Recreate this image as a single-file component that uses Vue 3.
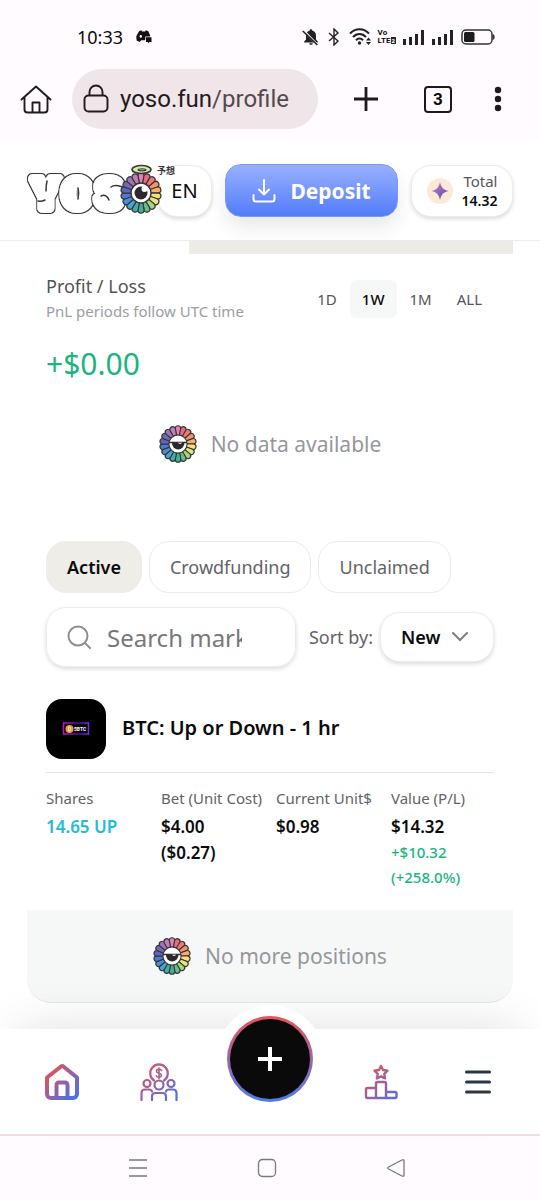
<script setup>
import { ref } from 'vue'

const petals = [
  '#e583b5', '#e66d86', '#ee7a6d', '#f2946b', '#f6b168', '#fbe07a',
  '#e3e97f', '#a8d47c', '#69bd86', '#46b190', '#3fb0a8', '#47a5d2',
  '#4b8fd2', '#4f78d0', '#5a66c0', '#7368b4', '#9877b6', '#c07db8'
]
const periods = ['1D', '1W', '1M', 'ALL']
const period = ref('1W')
const filters = ['Active', 'Crowdfunding', 'Unclaimed']
const filter = ref('Active')
const sort = ref('New')
const search = ref('')
</script>

<template>
  <div class="screen">
    <svg class="defs" aria-hidden="true">
      <defs>
        <symbol id="petals" viewBox="-50 -50 100 100">
          <path
            v-for="(color, i) in petals"
            :key="i"
            d="M0 0 L-7.4 -40 A7.4 8 0 0 1 7.4 -40 Z"
            :fill="color"
            stroke="#38353a"
            stroke-width="3"
            :transform="`rotate(${i * 20})`"
          />
        </symbol>
        <symbol id="sleepy" viewBox="-50 -50 100 100">
          <use href="#petals" x="-50" y="-50" width="100" height="100" />
          <circle r="24" fill="#fff" stroke="#38353a" stroke-width="3" />
          <path d="M-24 -4H24" stroke="#38353a" stroke-width="4" />
          <path d="M-16 -3H17A16 17 0 0 1 -16 -3Z" fill="#2b292c" />
          <path d="M0 -3H11A6 5 0 0 1 0 -3Z" fill="#fff" />
        </symbol>
        <linearGradient id="brand" x1="0" y1="0" x2="1" y2="1">
          <stop offset="0.15" stop-color="#d9545f" />
          <stop offset="0.9" stop-color="#4f6fe8" />
        </linearGradient>
        <linearGradient id="brandSoft" gradientUnits="userSpaceOnUse" x1="6" y1="4" x2="36" y2="38">
          <stop offset="0.1" stop-color="#d0566c" />
          <stop offset="0.9" stop-color="#5470e0" />
        </linearGradient>
        <filter id="outline" x="-30%" y="-30%" width="160%" height="160%">
          <feMorphology in="SourceAlpha" operator="dilate" radius="1.4" result="fat" />
          <feFlood flood-color="#38363a" />
          <feComposite in2="fat" operator="in" />
          <feMerge><feMergeNode /><feMergeNode in="SourceGraphic" /></feMerge>
        </filter>
      </defs>
    </svg>

    <div class="status">
      <div class="status-left">
        <span>10:33</span>
        <svg width="16" height="14" viewBox="0 0 16 14" fill="#111">
          <path d="M3 1.2 5.4.3 6 1.4h3L9.7.3l2.6.9 1.9 4.2-.3 1H9.3v3.2l-.6.7H5.2L3.6 12 .6 10.6.3 6.2Z" />
          <ellipse cx="4.8" cy="6.4" rx="1.2" ry="1.4" fill="#fffbff" />
          <path d="M10 7.3h5.5v4.8h-2.3L11.9 13.6v-1.5H10Z" />
        </svg>
      </div>
      <div class="status-right">
        <svg width="18" height="18" viewBox="0 0 18 18">
          <path d="M9 1.2c.8 0 1.2.5 1.2 1.2 2.4.7 3.8 2.5 3.8 5v4l1.8 2v1H2.2v-1l1.8-2v-4c0-2.5 1.4-4.3 3.8-5 0-.7.4-1.2 1.2-1.2ZM7.2 15.2h3.6c0 2.2-3.6 2.2-3.6 0Z" fill="#222" />
          <path d="M1.8 2.8 15.6 17" stroke="#fffbff" stroke-width="2" />
          <path d="M.8 3 15.4 17" stroke="#222" stroke-width="1.6" />
        </svg>
        <svg class="bt" width="12" height="18" viewBox="0 0 12 18" fill="none" stroke="#222" stroke-width="1.4">
          <path d="m1 5 9 8-4 4V1l4 4-9 8" />
        </svg>
        <svg class="wifi" width="23" height="18" viewBox="0 0 23 18" fill="none" stroke="#222" stroke-width="2.1">
          <path d="M1 5.6C6-.2 15-.2 20 5.6M4 9c3.6-4 9.400-4 13 0M7 12.200c2-2.200 5-2.200 7 0" />
          <circle cx="10.500" cy="15" r="1.700" fill="#222" stroke="none" />
          <path d="m17 12.400 2.500-3 2.500 3ZM17 14l2.500 3 2.500-3Z" fill="#222" stroke="none" />
        </svg>
        <span class="volte"><span>Vo</span><span>LTE<b>2</b></span></span>
        <svg v-for="n in 2" :key="n" class="bars" width="22" height="16" viewBox="0 0 22 16" fill="#222">
          <path d="M0 10h3v6H0ZM6 8h3v8H6ZM12 5h3v11h-3ZM18 1h3v15h-3Z" />
        </svg>
        <svg class="battery" width="34" height="16" viewBox="0 0 34 16">
          <rect x="1" y="1" width="30" height="14" rx="4" fill="none" stroke="#333" stroke-width="1.500" />
          <rect x="3" y="3" width="10.500" height="10" rx="1.500" fill="#1c1b1d" />
          <path d="M32 5.500c1.500.5 1.500 4.500 0 5Z" fill="#333" stroke="#333" />
        </svg>
      </div>
    </div>

    <div class="toolbar">
      <button class="plain" aria-label="Home page">
        <svg width="32" height="30" viewBox="0 0 32 30" fill="none" stroke="#1f1b1e" stroke-width="1.900" stroke-linejoin="round" stroke-linecap="round">
          <path d="M1.500 15.500 16 2.500l14.500 13M4.500 13v12.500a3 3 0 0 0 3 3h17a3 3 0 0 0 3-3V13M12.500 28V18.500h7V28" />
        </svg>
      </button>
      <a class="address" href="#profile">
        <svg width="26" height="30" viewBox="0 0 26 30" fill="none" stroke="#1f1b1e" stroke-width="1.900">
          <rect x="1.500" y="11.500" width="23" height="16" rx="4" />
          <path d="M6.500 11.500V8a6.500 6.500 0 0 1 13 0v3.500" />
        </svg>
        <span class="url">yoso.fun<i>/profile</i></span>
      </a>
      <button class="plain plus" aria-label="New tab">
        <svg width="24" height="24" viewBox="0 0 24 24" stroke="#1c1a1d" stroke-width="2.800"><path d="M12 0v24M0 12h24" /></svg>
      </button>
      <button class="plain tabs-count" aria-label="Open tabs">3</button>
      <button class="plain dots" aria-label="Menu">
        <svg width="8" height="26" viewBox="0 0 8 26" fill="#1c1a1d"><circle cx="4" cy="4" r="3.200" /><circle cx="4" cy="13" r="3.200" /><circle cx="4" cy="22" r="3.200" /></svg>
      </button>
    </div>

    <header class="site-header">
      <a class="logo" href="#home" aria-label="YOSO">
        <svg width="150" height="56" viewBox="0 0 150 56">
          <g class="bubble" filter="url(#outline)"><text x="6" y="45">Y</text></g>
          <g class="bubble" filter="url(#outline)"><text x="36" y="45">O</text></g>
          <g class="bubble" filter="url(#outline)"><text x="69" y="45">S</text></g>
          <g fill="none" stroke="#38363a" stroke-width="1.500" stroke-linecap="round">
            <path d="M20 18c-1 4-1 7-1 10M11 38c3 1 5 0 7-1M51 25c1 4 1 7 0 11M84 24c4-3 8-1 12 0M74 33c4-2 7 1 8 4" />
          </g>
          <use href="#petals" x="93" y="9" width="42" height="42" />
          <circle cx="114" cy="30" r="10" fill="#fff" stroke="#38353a" stroke-width="1.400" />
          <circle cx="114" cy="30" r="6.500" fill="#2b292c" />
          <circle cx="117.500" cy="26" r="3" fill="#fff" />
          <ellipse cx="114.500" cy="6.500" rx="9.500" ry="4" fill="#d5f0a9" stroke="#38363a" stroke-width="1.700" />
          <ellipse cx="115" cy="6.800" rx="4" ry="1" fill="#fff" stroke="#38363a" stroke-width="1.200" />
          <text class="kanji" x="130" y="11">予想</text>
        </svg>
      </a>
      <button class="lang">EN</button>
      <button class="deposit">
        <svg width="24" height="24" viewBox="0 0 24 24" fill="none" stroke="#fff" stroke-width="2" stroke-linecap="round" stroke-linejoin="round">
          <path d="M12 1v14M7 10.500l5 5 5-5M1.500 16v4a2.500 2.500 0 0 0 2.500 2.500h16a2.500 2.500 0 0 0 2.500-2.500v-4" />
        </svg>
        <span>Deposit</span>
      </button>
      <button class="total">
        <svg width="26" height="26" viewBox="0 0 26 26">
          <defs>
            <linearGradient id="spark" x1="0" y1="0" x2="1" y2="1"><stop offset="0.2" stop-color="#b878b8" /><stop offset="0.8" stop-color="#6a50b8" /></linearGradient>
          </defs>
          <circle cx="13" cy="13" r="13" fill="#fbe9d8" />
          <path d="M13 4c1.300 5.500 3 7.500 8.500 9-5.500 1.500-7.200 3.500-8.500 9-1.300-5.500-3-7.500-8.500-9 5.500-1.500 7.200-3.500 8.500-9Z" fill="url(#spark)" />
        </svg>
        <span class="total-text"><span>Total</span><strong>14.32</strong></span>
      </button>
    </header>

    <main>
      <div class="strip"></div>
      <section class="pnl">
        <div class="pnl-head">
          <div>
            <h2>Profit / Loss</h2>
            <p class="note">PnL periods follow UTC time</p>
          </div>
          <div class="periods">
            <button v-for="p in periods" :key="p" :class="{ on: p === period }" @click="period = p">{{ p }}</button>
          </div>
        </div>
        <p class="amount">+$0.00</p>
        <div class="empty">
          <svg width="38" height="38"><use href="#sleepy" width="38" height="38" /></svg>
          <span>No data available</span>
        </div>
      </section>

      <section class="positions">
        <div class="chips">
          <button v-for="f in filters" :key="f" :class="{ on: f === filter }" @click="filter = f">{{ f }}</button>
        </div>
        <div class="tools">
          <label class="search">
            <svg width="24" height="24" viewBox="0 0 24 24" fill="none" stroke="#8d8f93" stroke-width="2" stroke-linecap="round">
              <circle cx="11" cy="11" r="9.500" /><path d="m18 18 5 5" />
            </svg>
            <input v-model="search" type="text" placeholder="Search markets" aria-label="Search markets">
          </label>
          <label class="sort-label" for="sort">Sort by:</label>
          <div class="sort">
            <select id="sort" v-model="sort"><option>New</option></select>
            <svg width="16" height="10" viewBox="0 0 16 10" fill="none" stroke="#7d7f83" stroke-width="2" stroke-linecap="round"><path d="m1 1 7 7 7-7" /></svg>
          </div>
        </div>

        <article class="market">
          <div class="market-head">
            <svg class="thumb" width="60" height="60" viewBox="0 0 60 60">
              <defs>
                <linearGradient id="neon"><stop offset="0" stop-color="#b317c9" /><stop offset="0.6" stop-color="#4a1590" /><stop offset="1" stop-color="#6a35d8" /></linearGradient>
              </defs>
              <rect width="60" height="60" fill="#000" />
              <rect x="17.500" y="24" width="25" height="11" fill="#08020f" stroke="url(#neon)" stroke-width="1.500" />
              <circle cx="23.500" cy="30" r="4" fill="#f39a38" />
              <path d="M22.500 28h1.500q1 1 0 2 1 1 0 2h-1.500Z" fill="none" stroke="#fff" stroke-width=".7" />
              <text x="28" y="32">5BTC</text>
            </svg>
            <h3>BTC: Up or Down - 1 hr</h3>
          </div>
          <table>
            <thead>
              <tr><th>Shares</th><th>Bet (Unit Cost)</th><th>Current Unit$</th><th>Value (P/L)</th></tr>
            </thead>
            <tbody>
              <tr>
                <td class="side">14.65 UP</td>
                <td>$4.00<br>($0.27)</td>
                <td>$0.98</td>
                <td>$14.32<span class="gain">+$10.32<br>(+258.0%)</span></td>
              </tr>
            </tbody>
          </table>
        </article>
      </section>

      <div class="empty end">
        <svg width="38" height="38"><use href="#sleepy" width="38" height="38" /></svg>
        <span>No more positions</span>
      </div>
    </main>

    <nav class="bottom">
      <a href="#home" aria-label="Home">
        <svg width="36" height="38" viewBox="0 0 36 38" fill="none" stroke="url(#brand)" stroke-width="4" stroke-linejoin="round">
          <path d="M3 14.500 17 3.500q1.200-.8 2.400 0L33 14.500V31a4 4 0 0 1-4 4H7a4 4 0 0 1-4-4ZM12.500 35V22a2.500 2.500 0 0 1 2.500-2.500h6a2.500 2.500 0 0 1 2.500 2.500v13" />
        </svg>
      </a>
      <a href="#crowd" aria-label="Crowdfunding">
        <svg width="38" height="38" viewBox="0 0 38 38" fill="none" stroke="url(#brandSoft)" stroke-width="2.200" stroke-linecap="round">
          <path d="M14 17.500A8.800 8.800 0 1 1 24 17.500" />
          <path d="M21.500 7.500c-1-1.800-5-1.500-5 .8 0 2.600 5 1.400 5 4 0 2.200-4 2.500-5.200.6M19 5v10.500" stroke-width="1.600" />
          <circle cx="19" cy="22" r="4.500" /><circle cx="7" cy="20.500" r="3.500" /><circle cx="31" cy="20.500" r="3.500" />
          <path d="M1.500 37v-7q0-3.500 3.500-3.500h4q2.500 0 3 2M36.500 37v-7q0-3.500-3.500-3.500h-4q-2.500 0-3 2M12 37v-3.500q0-3.500 3.500-3.500h7q3.500 0 3.500 3.500V37" />
        </svg>
      </a>
      <div class="fab-cell">
        <button class="fab" aria-label="Create">
          <span><svg width="24" height="24" viewBox="0 0 24 24" stroke="#fff" stroke-width="4"><path d="M12 0v24M0 12h24" /></svg></span>
        </button>
      </div>
      <a href="#leaders" aria-label="Leaderboard">
        <svg width="34" height="36" viewBox="0 0 34 36" fill="none" stroke="url(#brandSoft)" stroke-width="2.400" stroke-linejoin="round">
          <path d="m17 2 2 4 4.500.7-3.200 3.200.7 4.500-4-2-4 2 .7-4.500-3.200-3.200L15 6Z" />
          <path d="M12 34H3.500q-1.500 0-1.500-1.500v-7Q2 24 3.500 24H12ZM12 34V19.500q0-1.500 1.500-1.500h7q1.500 0 1.500 1.500V34ZM22 34h9q1.500 0 1.500-1.500v-3q0-1.500-1.500-1.500h-9Z" />
        </svg>
      </a>
      <button class="plain" aria-label="Open menu">
        <svg width="28" height="24" viewBox="0 0 28 24" stroke="#2c3645" stroke-width="3" stroke-linecap="round"><path d="M2.500 2h23M2.500 12h23M2.500 22h23" /></svg>
      </button>
    </nav>

    <div class="system">
      <svg width="20" height="20" viewBox="0 0 20 20" stroke="#7b777c" stroke-width="1.500"><path d="M1 2h18M1 10h18M1 18h18" /></svg>
      <svg width="20" height="20" viewBox="0 0 20 20" fill="none" stroke="#7b777c" stroke-width="1.300"><rect x="1.500" y="1.500" width="17" height="17" rx="4" /></svg>
      <svg width="20" height="20" viewBox="0 0 20 20" fill="none" stroke="#7b777c" stroke-width="1.300" stroke-linejoin="round"><path d="M2.500 9 16 2q2-.8 2 1v14q0 1.800-2 1L2.500 11q-1.500-1 0-2Z" /></svg>
    </div>
  </div>
</template>

<style>
body {
  margin: 0;
  background: #fff;
}
</style>

<style scoped>
.screen {
  display: flex;
  flex-direction: column;
  min-height: 100vh;
  overflow: hidden;
  background: #fff;
  color: #0b0b0c;
  font-family: "Noto Sans", "Noto Sans CJK JP", sans-serif;
}
.screen *,
.screen {
  box-sizing: border-box;
}
.defs {
  position: absolute;
  width: 0;
  height: 0;
}
svg {
  display: block;
  flex: none;
}
button,
input,
select {
  font: inherit;
  color: inherit;
}
button {
  cursor: pointer;
  padding: 0;
}
a {
  color: inherit;
  text-decoration: none;
}
h2,
h3,
p {
  margin: 0;
  font-weight: 400;
}
.plain {
  display: flex;
  align-items: center;
  justify-content: center;
  border: 0;
  background: none;
}

.status {
  display: flex;
  justify-content: space-between;
  align-items: center;
  padding: 4px 45px 0 77px;
  height: 69px;
  background: #fffbff;
}
.status-left,
.status-right {
  display: flex;
  align-items: center;
}
.status-left {
  gap: 13px;
  font-size: 18px;
}
.bt {
  margin-left: 8px;
}
.wifi {
  margin-left: 9px;
}
.volte {
  display: flex;
  flex-direction: column;
  margin: 0 7px 0 6px;
  font: 700 8px/8px Roboto, sans-serif;
}
.volte b {
  padding: 0 1px;
  background: #222;
  color: #fff;
  font-size: 6px;
}
.bars {
  margin-right: 7px;
}

.toolbar {
  display: flex;
  align-items: center;
  padding: 0 38px 12px 20px;
  background: #fffbff;
}
.address {
  display: flex;
  flex: 1;
  align-items: center;
  gap: 11px;
  min-width: 0;
  height: 60px;
  margin: 0 36px 0 20px;
  padding: 0 11px;
  border-radius: 30px;
  background: #f0e6e9;
}
.url {
  font: 400 24px/32px Roboto, sans-serif;
  color: #1f1b1e;
}
.url i {
  font-style: normal;
  color: #55494d;
}
.tabs-count {
  width: 28px;
  height: 27px;
  margin: 0 42px 0 46px;
  border: 2px solid #1c1a1d;
  border-radius: 4px;
  font: 700 17px/20px Roboto, sans-serif;
}

.site-header {
  display: flex;
  align-items: center;
  height: 100px;
  padding: 0 27px;
  border-bottom: 1px solid #ececec;
}
.logo {
  position: relative;
  z-index: 1;
  margin-right: -20px;
}
.bubble {
  font: 900 41px Roboto, sans-serif;
  fill: #fff;
  stroke: #fff;
  stroke-width: 10px;
  stroke-linejoin: round;
}
.kanji {
  font: 600 9px "Noto Sans CJK JP", sans-serif;
  fill: #38363a;
}
.lang,
.total {
  border: 1px solid #ececec;
  border-radius: 20px;
  background: #fff;
  box-shadow: 0 2px 4px rgba(0, 0, 0, 0.14);
}
.lang {
  width: 55px;
  height: 52px;
  font-size: 20px;
}
.deposit {
  display: flex;
  flex: 1;
  align-items: center;
  justify-content: center;
  gap: 14px;
  height: 53px;
  margin: 0 13px;
  border: 1px solid #7c98f8;
  border-radius: 16px;
  background: linear-gradient(#98b0ff, #527cfa);
  box-shadow: 0 10px 20px rgba(0, 0, 0, 0.09);
  color: #fff;
  font-size: 21px;
  font-weight: 700;
}
.total {
  display: flex;
  align-items: center;
  justify-content: center;
  gap: 9px;
  width: 102px;
  height: 52px;
}
.total-text {
  display: flex;
  flex-direction: column;
  align-items: flex-end;
  font-size: 15px;
  line-height: 20px;
  color: #55565a;
}
.total strong {
  color: #0b0b0c;
  font-size: 14px;
  font-weight: 600;
}

main {
  flex: 1;
}
.strip {
  height: 13px;
  margin: 0 27px 0 35%;
  background: #ecebe6;
}
.pnl,
.positions {
  padding: 0 46px;
}
.pnl {
  padding-top: 20px;
}
.pnl-head {
  display: flex;
  align-items: center;
  justify-content: space-between;
}
h2 {
  font-size: 18px;
  line-height: 25px;
  color: #525356;
}
.note {
  font-size: 15px;
  line-height: 24px;
  color: #9b9da3;
}
.periods {
  display: flex;
  gap: 1px;
}
.periods button {
  height: 38px;
  padding: 0 12px;
  border: 0;
  border-radius: 6px;
  background: none;
  color: #55565a;
  font-size: 15px;
}
.periods .on {
  background: #f6f8f8;
  color: #0b0b0c;
  font-weight: 500;
}
.amount {
  margin-top: 21px;
  font-size: 30px;
  line-height: 40px;
  color: #1cb57e;
}
.empty {
  display: flex;
  align-items: center;
  justify-content: center;
  gap: 14px;
  padding: 41px 0 78px;
  color: #95979c;
  font-size: 21px;
  line-height: 38px;
}
.chips {
  display: flex;
  gap: 7px;
}
.chips button {
  height: 52px;
  padding: 0 20px;
  border: 1px solid #ebebeb;
  border-radius: 20px;
  background: #fff;
  color: #626367;
  font-size: 18px;
}
.chips .on {
  border-color: #eeede8;
  background: #eeede8;
  color: #0b0b0c;
  font-weight: 600;
}
.tools {
  display: flex;
  align-items: center;
  margin-top: 14px;
}
.search {
  display: flex;
  flex: 1;
  align-items: center;
  gap: 16px;
  min-width: 0;
  height: 60px;
  padding: 0 53px 0 20px;
  border: 1px solid #ececec;
  border-radius: 20px;
  box-shadow: 0 2px 4px rgba(0, 0, 0, 0.14);
}
.search input {
  flex: 1;
  min-width: 0;
  width: 0;
  padding: 0;
  border: 0;
  outline: 0;
  background: none;
  font-size: 24px;
}
.search input::placeholder {
  color: #77787c;
}
.sort-label {
  margin: 0 7px 0 13px;
  color: #626367;
  font-size: 18px;
}
.sort {
  position: relative;
}
.sort select {
  appearance: none;
  width: 114px;
  height: 50px;
  padding: 0 20px;
  border: 1px solid #ececec;
  border-radius: 20px;
  background: #fff;
  box-shadow: 0 2px 4px rgba(0, 0, 0, 0.14);
  font-size: 18px;
  font-weight: 600;
}
.sort svg {
  position: absolute;
  top: 20px;
  right: 26px;
  pointer-events: none;
}
.market-head {
  display: flex;
  align-items: center;
  gap: 16px;
  margin-top: 32px;
  padding-bottom: 13px;
  border-bottom: 1px solid #e6e6e6;
}
.thumb {
  border-radius: 16px;
}
.thumb text {
  font: 700 5px Roboto, sans-serif;
  fill: #fff;
}
h3 {
  padding-bottom: 4px;
  font-size: 20px;
  font-weight: 600;
}
table {
  width: 100%;
  margin: 13px 0 20px;
  border-collapse: collapse;
  table-layout: fixed;
  text-align: left;
}
th,
td {
  padding: 0;
  vertical-align: top;
  white-space: nowrap;
}
th:last-child {
  width: 23%;
}
th {
  color: #626367;
  font-size: 15px;
  font-weight: 400;
  line-height: 24px;
}
td {
  padding-top: 4px;
  font-size: 17px;
  font-weight: 600;
  line-height: 26px;
}
.side {
  color: #22bcd8;
}
.gain {
  display: block;
  color: #1cb57e;
  font-size: 15px;
  font-weight: 500;
  line-height: 25px;
}
.end {
  margin: 0 27px 26px;
  padding: 27px 0;
  border-bottom: 1px solid #e6e8e8;
  border-radius: 0 0 24px 24px;
  background: #f6f8f8;
}

.bottom {
  position: relative;
  display: grid;
  grid-template-columns: 1fr 1fr 125px 1fr 1fr;
  align-items: center;
  justify-items: center;
  height: 105px;
  padding: 0 13px;
  background: #fff;
  box-shadow: 0 -20px 50px -20px rgba(0, 0, 0, 0.13);
}
.fab-cell {
  position: relative;
  align-self: stretch;
  width: 86px;
}
.fab {
  position: absolute;
  top: -13px;
  left: 0;
  width: 86px;
  height: 86px;
  padding: 3px;
  border: 0;
  border-radius: 50%;
  background: linear-gradient(#e8545a, #4f7bea);
  box-shadow: 0 0 0 11px #fff;
}
.fab span {
  display: flex;
  align-items: center;
  justify-content: center;
  height: 100%;
  border-radius: 50%;
  background: #0a0a0a;
}
.system {
  display: flex;
  align-items: center;
  justify-content: center;
  gap: 109px;
  height: 66px;
  padding-right: 7px;
  border-top: 2px solid #f3dbe2;
  background: #fffbff;
}
</style>
